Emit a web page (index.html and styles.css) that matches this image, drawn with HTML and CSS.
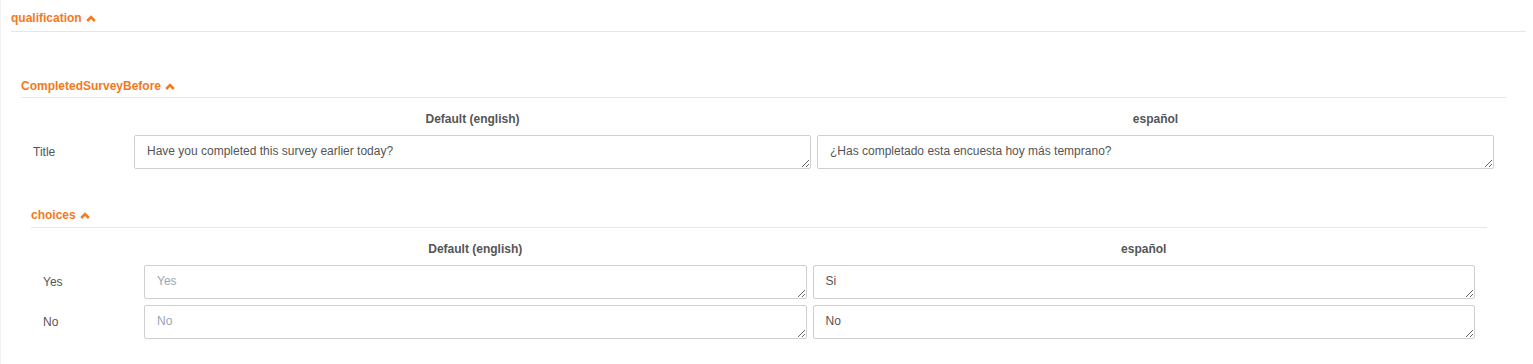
FILE: index.html
```html
<!DOCTYPE html>
<html lang="en">
<head>
<meta charset="utf-8">
<title>Translations</title>
<link rel="stylesheet" href="styles.css">
</head>
<body>
<div class="page">
  <section class="sec sec-top">
    <div class="sec-head head-top">qualification <svg class="chev" viewBox="0 0 10 7" width="10" height="7"><path d="M1.2 6 L5 2.2 L8.8 6" fill="none" stroke="currentColor" stroke-width="2.6"/></svg></div>
    <section class="sec sec-q">
      <div class="sec-head head-q">CompletedSurveyBefore <svg class="chev" viewBox="0 0 10 7" width="10" height="7"><path d="M1.2 6 L5 2.2 L8.8 6" fill="none" stroke="currentColor" stroke-width="2.6"/></svg></div>
      <div class="grid">
        <div></div>
        <div class="col-head">Default (english)</div>
        <div class="col-head">español</div>
        <div class="row-label">Title</div>
        <textarea class="field">Have you completed this survey earlier today?</textarea>
        <textarea class="field">¿Has completado esta encuesta hoy más temprano?</textarea>
      </div>
      <section class="sec sec-c">
        <div class="sec-head head-c">choices <svg class="chev" viewBox="0 0 10 7" width="10" height="7"><path d="M1.2 6 L5 2.2 L8.8 6" fill="none" stroke="currentColor" stroke-width="2.6"/></svg></div>
        <div class="grid">
          <div></div>
          <div class="col-head">Default (english)</div>
          <div class="col-head">español</div>
          <div class="row-label">Yes</div>
          <textarea class="field" placeholder="Yes"></textarea>
          <textarea class="field">Si</textarea>
          <div class="row-label">No</div>
          <textarea class="field" placeholder="No"></textarea>
          <textarea class="field">No</textarea>
        </div>
      </section>
    </section>
  </section>
</div>
</body>
</html>
```

FILE: styles.css
```css
html, body {
  margin: 0;
  background: #fff;
}
body {
  font-family: "Liberation Sans", Arial, Helvetica, sans-serif;
  font-size: 12px;
  color: #555;
}
.page {
  border-left: 1px solid #f2f2f2;
  height: 364px;
  box-sizing: border-box;
  padding: 0 7px 0 10px;
}
.sec-head {
  display: flex;
  align-items: center;
  gap: 4px;
  font-weight: bold;
  color: #f47920;
  line-height: 14px;
  border-bottom: 1px solid #e6e6e6;
}
.chev {
  display: block;
  margin-top: 1px;
}
.head-top {
  padding-top: 11px;
  padding-bottom: 6px;
}
.sec-q {
  margin: 47px 20px 0 10px;
}
.head-q {
  padding-bottom: 4px;
}
.sec-c {
  margin: 39px 19px 0 10px;
}
.head-c {
  padding-bottom: 5px;
}
.grid {
  display: grid;
  grid-template-columns: 95px 1fr 1fr;
  column-gap: 6px;
  row-gap: 6px;
  padding: 14px 12px 0 12px;
  align-items: center;
}
.col-head {
  font-weight: bold;
  text-align: center;
  line-height: 14px;
  margin-bottom: 3px;
}
.row-label {
  line-height: 14px;
}
.field {
  display: block;
  box-sizing: border-box;
  width: 100%;
  height: 34px;
  margin: 0;
  padding: 7px 12px;
  border: 1px solid #cfcfcf;
  border-radius: 2px;
  font-family: "Liberation Sans", Arial, sans-serif;
  font-size: 12px;
  line-height: 16px;
  color: #555;
  background: #fff;
  resize: vertical;
  overflow: hidden;
}
.field::placeholder {
  color: #9aa5b5;
}
```
